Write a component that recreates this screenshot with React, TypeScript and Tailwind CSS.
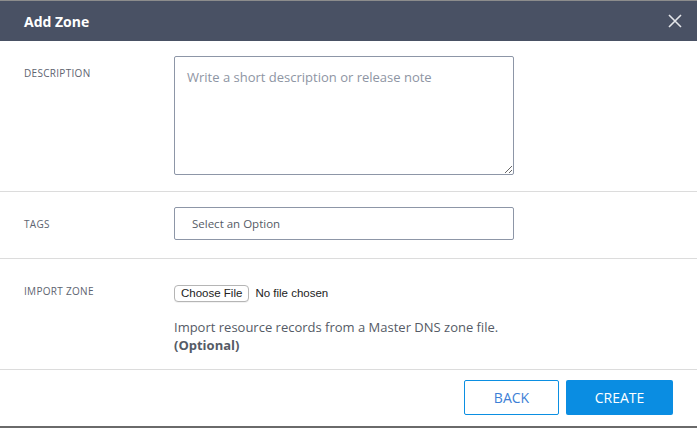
import { useState } from "react";

export default function App() {
  const [desc, setDesc] = useState("");

  return (
    <div className="flex h-[428px] w-[697px] flex-col bg-white font-['Open_Sans',sans-serif] text-[#555b66]">
      {/* Header */}
      <div className="border-t border-[#8c8c8c]">
        <div className="flex h-[40px] items-center justify-between bg-[#495164] pl-6 pr-[12px]">
          <h1 className="text-[14px] font-bold text-white">Add Zone</h1>
          <button type="button" className="flex h-[20px] w-[20px] items-center justify-center text-[#e4e6ea]">
            <svg width="14" height="14" viewBox="0 0 14 14" fill="none" stroke="currentColor" strokeWidth="1.6">
              <path d="M1 1 L13 13 M13 1 L1 13" />
            </svg>
          </button>
        </div>
      </div>

      {/* Description */}
      <div className="flex border-b border-[#dcdcdc] pt-[15px] pb-[16px]">
        <div className="w-[174px] pl-6 pt-[10px] text-[10px] tracking-[0.3px] text-[#5e6470]">DESCRIPTION</div>
        <textarea
          value={desc}
          onChange={(e) => setDesc(e.target.value)}
          placeholder="Write a short description or release note"
          className="h-[119px] w-[340px] rounded-[2px] border border-[#8d96a7] px-3 pt-[10px] pb-[8px] text-[13px] leading-[20px] text-[#555b66] outline-none placeholder:text-[#8e95a3]"
        />
      </div>

      {/* Tags */}
      <div className="flex items-center border-b border-[#dcdcdc] pt-[15px] pb-[18px]">
        <div className="w-[174px] pl-6 pt-[1px] text-[10px] tracking-[0.3px] text-[#5e6470]">TAGS</div>
        <div className="flex h-[33px] w-[340px] items-center rounded-[2px] border border-[#8d96a7] pl-[17px] text-[11.5px] text-[#555b66]">
          Select an Option
        </div>
      </div>

      {/* Import zone */}
      <div className="flex border-b border-[#dcdcdc] pt-[26px] pb-[15px]">
        <div className="w-[174px] pl-6 text-[10px] leading-[13px] tracking-[0.3px] text-[#5e6470]">IMPORT ZONE</div>
        <div className="flex flex-col">
          <div className="flex items-center gap-[6px] font-['Liberation_Sans',sans-serif] text-[11.5px] text-[#222]">
            <span className="flex h-[17px] items-center rounded-[4px] border border-[#b5b5b5] bg-white px-[6px] shadow-[0_1px_0_rgba(0,0,0,0.05)]">
              Choose File
            </span>
            <span>No file chosen</span>
          </div>
          <p className="mt-[16px] text-[13px] leading-[18px] text-[#555b66]">
            Import resource records from a Master DNS zone file.
            <br />
            <span className="font-bold">(Optional)</span>
          </p>
        </div>
      </div>

      {/* Footer */}
      <div className="flex flex-1 items-start justify-end gap-[7px] pt-[10px] pr-6">
        <button type="button" className="h-[35px] w-[95px] rounded-[2px] border border-[#0b8fe2] bg-white text-[14px] text-[#3d7fd6]">
          BACK
        </button>
        <button type="button" className="h-[35px] w-[107px] rounded-[2px] bg-[#0a8de2] text-[14px] text-white">
          CREATE
        </button>
      </div>
      <div className="h-[2px] bg-[#6a6a6a]" />
    </div>
  );
}
